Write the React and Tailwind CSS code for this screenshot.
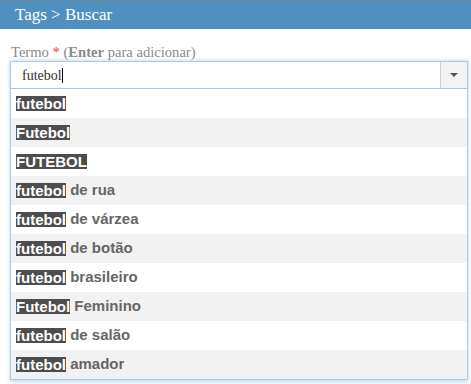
const items = [
  ['futebol', ''],
  ['Futebol', ''],
  ['FUTEBOL', ''],
  ['futebol', ' de rua'],
  ['futebol', ' de várzea'],
  ['futebol', ' de botão'],
  ['futebol', ' brasileiro'],
  ['Futebol', ' Feminino'],
  ['futebol', ' de salão'],
  ['futebol', ' amador'],
]

function App() {
  return (
    <div className="w-[471px] h-[384px] bg-white overflow-hidden">
      <div className="h-[29px] bg-[#5090c0] border-t border-[#6d8aa2] flex items-center pl-[15px] font-['Liberation_Serif',serif] text-[17px] text-white">
        Tags &gt; Buscar
      </div>
      <div className="pt-[15px] pl-[10px] pr-[3px]">
        <div className="pl-px text-[14.6px] leading-[16px] text-[#8a8a8a] font-['Liberation_Serif',serif]">
          Termo <span className="text-[#e04040]">*</span> (<b>Enter</b> para adicionar)
        </div>
        <div className="mt-px h-[28px] flex bg-white border border-[#a8cbea] shadow-[0_0_4px_rgba(82,150,220,0.45)]">
          <div className="flex-1 flex items-center pl-[11px] font-['Liberation_Serif',serif] text-[14px] text-[#333]">
            futebol
            <span className="w-px h-[15px] bg-black"></span>
          </div>
          <div className="w-[27px] border-l border-[#d0d0d0] bg-[#f3f3f3] flex items-center justify-center">
            <span className="w-0 h-0 border-x-[4px] border-x-transparent border-t-[4px] border-t-[#555]"></span>
          </div>
        </div>
        <div className="border border-t-0 border-[#a8cbea] shadow-[0_2px_4px_rgba(82,150,220,0.35)] font-['Liberation_Sans',Arial,sans-serif] font-bold text-[15px] text-[#666]">
          {items.map(([hl, rest], i) => (
            <div
              key={i}
              className={`h-[29px] flex items-center pl-[5px] whitespace-pre ${i % 2 ? 'bg-[#f2f2f2]' : 'bg-white'}`}
            >
              <span className="inline-block leading-[15px] bg-[#4d4d4d] text-white">{hl}</span>
              {rest}
            </div>
          ))}
        </div>
      </div>
    </div>
  )
}

export default App
